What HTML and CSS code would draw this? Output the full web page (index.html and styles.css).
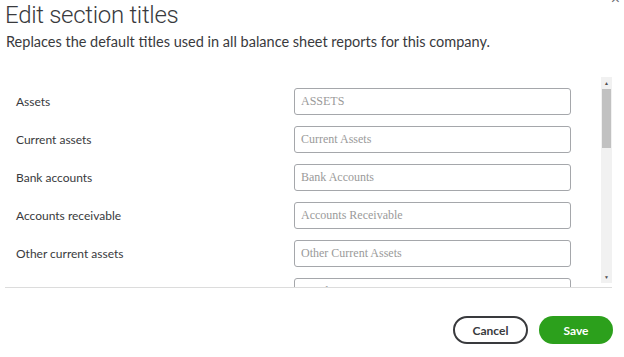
FILE: index.html
```html
<!DOCTYPE html>
<html lang="en">
<head>
    <meta charset="UTF-8">
    <title>Edit section titles</title>
    <link rel="stylesheet" href="styles.css">
</head>
<body>
    <div class="dialog">
        <!-- Header -->
        <div class="header">
            <h1>Edit section titles</h1>
            <p>Replaces the default titles used in all balance sheet reports for this company.</p>
            <span class="close">&times;</span>
        </div>

        <!-- Section title list -->
        <div class="scroll-area">
            <div class="rows">
                <div class="row">
                    <label>Assets</label>
                    <input type="text" placeholder="ASSETS">
                </div>
                <div class="row">
                    <label>Current assets</label>
                    <input type="text" placeholder="Current Assets">
                </div>
                <div class="row">
                    <label>Bank accounts</label>
                    <input type="text" placeholder="Bank Accounts">
                </div>
                <div class="row">
                    <label>Accounts receivable</label>
                    <input type="text" placeholder="Accounts Receivable">
                </div>
                <div class="row">
                    <label>Other current assets</label>
                    <input type="text" placeholder="Other Current Assets">
                </div>
                <div class="row">
                    <label>Fixed assets</label>
                    <input type="text" placeholder="Fixed Assets">
                </div>
            </div>
            <div class="scrollbar">
                <span class="arrow">&#9650;</span>
                <div class="thumb"></div>
                <div class="track"></div>
                <span class="arrow">&#9660;</span>
            </div>
        </div>

        <!-- Footer buttons -->
        <div class="footer">
            <button class="button cancel">Cancel</button>
            <button class="button save">Save</button>
        </div>
    </div>
</body>
</html>
```

FILE: styles.css
```css
/* General Styles */
body {
    font-family: Lato, "Open Sans", sans-serif;
    background-color: #ffffff;
    color: #393a3d;
    margin: 0;
    padding: 0;
}

.dialog {
    width: 624px;
    height: 357px;
    overflow: hidden;
}

/* Header */
.header {
    position: relative;
    padding: 1px 0 0 5px;
}

.header h1 {
    margin: 0;
    font-family: Roboto, sans-serif;
    font-size: 24px;
    font-weight: 300;
    line-height: 28px;
    letter-spacing: -0.3px;
}

.header p {
    margin: 4px 0 0 1px;
    font-size: 14.5px;
    line-height: 18px;
}

.close {
    position: absolute;
    top: -12px;
    right: 4px;
    font-size: 16px;
    color: #6b6c72;
}

/* Scroll Area */
.scroll-area {
    display: flex;
    width: 607px;
    height: 210px;
    margin: 26px 0 0 5px;
    border-bottom: 1px solid #dcdcdc;
}

.rows {
    flex: 1;
    overflow: hidden;
    padding: 11px 0 0 11px;
}

.row {
    display: flex;
    align-items: center;
    height: 27px;
    margin-bottom: 11px;
}

.row label {
    width: 278px;
    font-size: 12px;
}

.row input {
    width: 277px;
    height: 27px;
    box-sizing: border-box;
    border: 1px solid #a5a7ab;
    border-radius: 3px;
    padding: 0 6px;
    font-family: "Liberation Serif", serif;
    font-size: 12px;
}

.row input::placeholder {
    color: #9a9a9a;
}

/* Fake scrollbar */
.scrollbar {
    display: flex;
    flex-direction: column;
    width: 11px;
    margin-bottom: 4px;
    background-color: #f1f1f1;
}

.arrow {
    height: 12px;
    font-size: 5px;
    line-height: 12px;
    text-align: center;
    color: #505050;
}

.thumb {
    height: 59px;
    margin: 0 1px;
    background-color: #c1c1c1;
}

.track {
    flex: 1;
}

/* Footer */
.footer {
    display: flex;
    justify-content: flex-end;
    gap: 11px;
    padding: 28px 11px 0 0;
}

.button {
    height: 28px;
    border-radius: 14px;
    font-family: Lato, sans-serif;
    font-size: 12px;
    font-weight: 700;
    cursor: pointer;
}

.cancel {
    width: 75px;
    background-color: #ffffff;
    border: 2px solid #393a3d;
    color: #393a3d;
}

.save {
    width: 74px;
    background-color: #2ca01c;
    border: none;
    color: #ffffff;
}
```
